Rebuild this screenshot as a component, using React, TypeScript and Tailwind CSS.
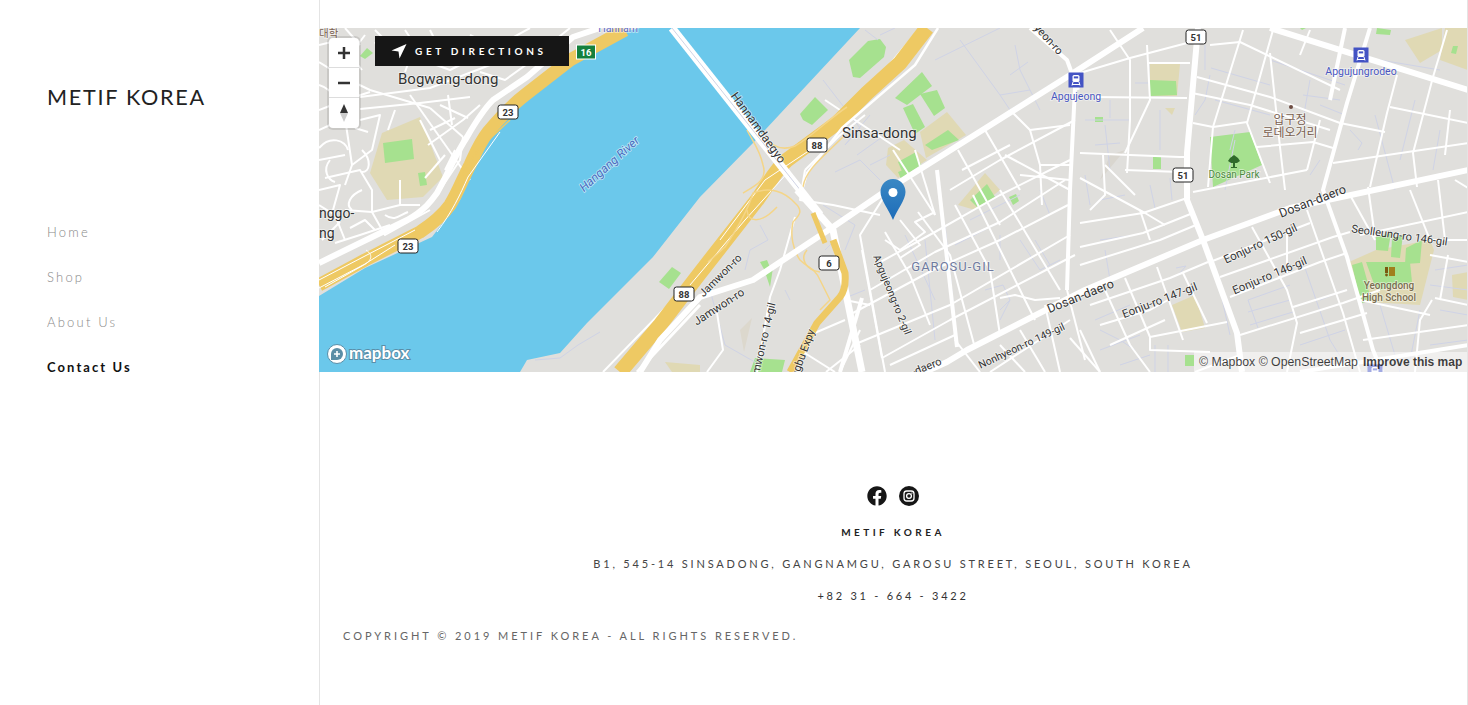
import { FaFacebook } from 'react-icons/fa'

const sans = '"Lato", "Noto Sans", sans-serif'
const din = 'Roboto, "Noto Sans CJK KR", sans-serif'

const parks = [
  'M360 56L367 48L373 53L365 59Z',
  'M383 143L412 139L414 159L385 163Z',
  'M418 173L425 172L427 185L420 186Z',
  'M672 267L681 273L669 289L659 282Z',
  'M849 60L868 41L880 39L886 47L884 57L860 78L853 77Z',
  'M800 114L815 97L828 110L812 125L803 120Z',
  'M895 98L922 72L932 86L907 105Z',
  'M920 94L937 90L945 108L934 116Z',
  'M903 108L913 104L925 127L915 134Z',
  'M925 145L948 130L959 140L932 150Z',
  'M898 162L916 152L921 165L904 176Z',
  'M898 172L903 170L906 176L901 179Z',
  'M970 200L987 184L995 197L977 207Z',
  'M1009 197L1016 194L1019 201L1013 205Z',
  'M1150 80L1176 81L1177 95L1150 96Z',
  'M1095 117L1103 117L1103 122L1095 122Z',
  'M1153 157L1161 157L1161 169L1153 169Z',
  'M1210 137L1250 132L1262 165L1213 187Z',
  'M1377 28L1391 30L1390 35L1376 34Z',
  'M1453 46L1458 46L1456 54L1451 53Z',
  'M1300 28L1306 28L1302 30Z',
  'M1376 237L1391 233L1388 251L1376 250Z',
  'M1392 238L1403 235L1400 258L1391 257Z',
  'M1406 248L1422 240L1420 263L1405 264Z',
  'M1352 265L1362 262L1369 287L1358 291Z',
  'M1366 262L1410 262L1412 282L1380 290L1374 284Z',
  'M1356 284L1366 283L1372 300L1362 303Z',
  'M755 358L785 360L782 372L750 372Z',
  'M760 262L767 260L771 270L765 271Z',
  'M766 275L773 268L770 287Z',
  'M1185 355L1194 355L1194 366L1185 366Z',
]

const sand = [
  'M382 133L420 117L443 177L423 197L387 200L370 173Z',
  'M888 148L904 140L927 160L898 178L886 165Z',
  'M920 132L947 112L966 135L926 158Z',
  'M958 205L985 173L1000 190L975 210Z',
  'M1150 63L1180 64L1177 96L1150 96Z',
  'M1405 40L1442 28L1442 50L1420 63Z',
  'M1445 28L1468 28L1468 70L1440 60Z',
  'M1172 305L1195 295L1205 328L1182 332Z',
  'M1349 262L1376 250L1430 240L1434 250L1420 305L1368 302L1356 290Z',
  'M1452 275L1468 272L1468 300L1453 297Z',
  'M665 362L700 365L700 372L672 372Z',
  'M1165 108L1175 108L1172 115Z',
]

// service streets
const lanes = [
  'M823 80L860 128L845 145', 'M845 145L870 115', 'M880 35L895 28', 'M865 30L878 40',
  'M935 60L1000 28', 'M960 40L1000 95L1030 90L1020 70L1015 45', 'M1000 95L1010 110L1050 85', 'M1010 75L1028 62',
  'M1030 90L1040 110', 'M835 172L860 160L880 180', 'M857 155L885 135', 'M870 165L890 155',
  'M1135 83L1149 83', 'M1085 120L1130 120', 'M1095 145L1120 143', 'M1105 125L1110 170', 'M1205 45L1205 70',
  'M1210 75L1205 100L1195 115', 'M1211 68L1270 85', 'M1215 100L1270 115', 'M1270 60L1345 85', 'M1303 95L1340 100',
  'M1310 80L1302 125', 'M1320 105L1345 115', 'M1350 130L1362 143L1358 150', 'M1320 160L1310 175', 'M1230 150L1235 130',
  'M1235 140L1225 190', 'M1380 60L1440 70', 'M1375 115L1395 190', 'M1415 100L1400 160', 'M1440 130L1433 170',
  'M1105 250L1110 280', 'M1100 240L1135 235', 'M1176 268L1186 266L1178 275', 'M1220 290L1230 335', 'M1248 300L1290 285',
  'M1248 312L1290 300', 'M1250 325L1293 312', 'M1248 300L1258 328', 'M1305 268L1330 340', 'M1320 300L1345 290',
  'M1300 345L1345 330', 'M1330 340L1350 372', 'M1380 305L1400 372', 'M1420 310L1410 360', 'M1440 310L1468 315',
  'M1430 285L1468 290', 'M1435 270L1468 265', 'M1430 345L1468 340', 'M1100 330L1120 340L1135 350', 'M1095 320L1130 305',
  'M1100 350L1140 335', 'M1120 365L1150 355', 'M1155 345L1155 372', 'M1168 345L1168 372', 'M760 225L768 240L750 250L745 270',
  'M785 290L790 300', 'M710 290L725 345L760 365', 'M823 205L855 225L845 250', 'M825 250L835 240', 'M840 300L865 290',
  'M985 290L1003 285L1010 300L1000 310', 'M970 220L1020 195', 'M1020 240L1040 270L1060 260', 'M1000 235L1000 260',
  'M955 245L1000 222', 'M945 225L955 320', 'M925 240L935 340', 'M905 235L935 300',
  'M535 360L560 358L578 345L600 332', 'M1035 240L1050 265', 'M1000 320L1010 300', 'M1040 190L1050 215', 'M1100 200L1125 195',
  'M1085 175L1090 205', 'M1160 110L1160 150', 'M1110 100L1110 118', 'M1150 185L1155 208', 'M1170 178L1172 200',
]

// ordinary white streets
const streets = [
  // Bogwang-dong
  'M319 62L345 78L370 90L430 108', 'M319 110L345 100L370 92', 'M360 109L420 103L470 97', 'M360 97L430 88L490 65', 'M410 95L470 180',
  'M360 120L380 115L372 150L352 165L345 185', 'M319 130L345 118L352 165', 'M319 160L345 155', 'M325 178L360 170L372 190L372 212',
  'M319 190L340 185L333 210L345 240', 'M345 210L372 212L400 205', 'M372 212L385 235L430 210', 'M335 243L360 235L390 225',
  'M428 145L463 120L480 105', 'M430 108L463 137', 'M375 30L395 50L450 70L490 50L530 28', 'M345 28L360 45', 'M319 45L340 40',
  'M430 30L445 60', 'M400 180L400 205L420 205', 'M440 190L460 160L463 137', 'M425 178L445 155', 'M420 120L440 160',
  'M470 35L510 55L555 40', 'M570 28L545 48', 'M319 205L335 215', 'M322 240L340 222',
  'M319 85C335 90 340 105 338 118', 'M319 148C330 135 345 140 348 150', 'M330 160C322 170 328 180 335 182', 'M355 128L368 132',
  'M362 150C372 160 370 172 362 172', 'M362 190C350 195 345 205 352 210', 'M385 215C395 222 400 215 408 212', 'M395 110L388 130',
  'M362 70L350 55L365 35', 'M385 65L375 42', 'M405 72L415 45L405 30', 'M440 48L465 60', 'M480 72L505 80L530 62', 'M448 95L452 125',
  'M468 118L440 105', 'M430 130L455 118', 'M445 170L455 150', 'M350 228L365 220L375 230',
  // Jamwon side
  'M603 372L673 300L720 245', 'M757 372L770 297L780 270L795 217', 'M717 313L723 350L707 372', 'M800 350L835 372',
  'M810 335L845 320', 'M826 372L860 345', 'M805 170L800 200L833 205L880 215', 'M805 170L840 135L865 115', 'M920 28L885 70',
  'M845 300L870 305', 'M840 372L860 330',
  // Garosu
  'M893 150L935 215', 'M825 100L900 150', 'M885 195L860 235L880 345L885 372', 'M862 250L875 320L882 358', 'M882 358L950 320L1075 255',
  'M858 343L950 305L1070 235', 'M853 313L933 270L1000 240L1068 205', 'M870 290L935 252L1000 222L1065 180', 'M875 265L935 232L1000 195L1070 160',
  'M885 240L900 250L925 232L915 222L935 212', 'M900 220L920 245L900 258', 'M885 232L910 275L930 325', 'M918 212L950 255L975 348', 'M955 205L990 270L1000 335',
  'M973 195L1025 300L1035 320', 'M1000 190L1060 290', 'M950 190L1000 160L1060 128L1075 120', 'M962 170L1010 145', 'M958 150L1000 225',
  'M985 130L1020 190', 'M1010 110L1030 130L1070 125', 'M1030 130L1040 165L1070 165', 'M1040 165L1042 205', 'M1005 155L1070 190',
  'M1020 175L1070 180', 'M915 150L935 215', 'M955 340L980 372', 'M890 365L955 335', 'M1000 345L1025 372', 'M1020 330L1045 372', 'M990 372L1070 320',
  'M1067 290L1085 360', 'M1045 305L1060 372', 'M1070 338L1100 372', 'M1000 298L1015 295L1035 300L1060 298',
  // Apgujeong to Dosan
  'M1080 73L1130 58L1187 43', 'M1110 30L1130 60L1130 120L1127 173', 'M1147 63L1190 63', 'M1147 45L1150 100L1125 153', 'M1093 97L1187 98',
  'M1080 153L1180 157L1187 157', 'M1103 155L1105 195L1090 210', 'M1125 170L1180 172', 'M1105 165L1135 195', 'M1080 178L1145 213L1165 225',
  'M1080 223L1143 213L1190 197', 'M1080 247L1143 233L1193 213', 'M1140 210L1150 240', 'M1090 305L1170 278L1208 262',
  'M1080 265L1160 240L1196 225', 'M1157 267L1183 340', 'M1183 273L1207 323', 'M1150 337L1227 322', 'M1150 337L1150 350L1210 352',
  'M1100 325L1150 310L1168 300', 'M1110 345L1165 320', 'M1080 330L1100 372', 'M1105 290L1130 345L1150 372', 'M1125 278L1150 337',
  'M1210 45L1240 42L1340 90', 'M1197 77L1270 97L1340 123L1385 132', 'M1192 93L1250 105L1330 130', 'M1243 30L1213 127L1208 187', 'M1273 30L1247 123L1270 183',
  'M1213 127L1247 122', 'M1193 123L1213 127', 'M1257 147L1313 142L1333 148', 'M1193 192L1307 170', 'M1270 53L1280 147L1285 190', 'M1307 170L1320 120',
  'M1310 30L1300 55', 'M1397 75L1387 113L1370 187', 'M1447 30L1433 77L1413 153L1417 187', 'M1390 107L1468 123', 'M1333 163L1468 143', 'M1450 110L1445 155',
  'M1368 187L1375 237', 'M1210 262L1310 223', 'M1220 277L1333 237L1350 232', 'M1230 297L1320 262L1347 253', 'M1240 335L1343 303L1380 290', 'M1293 307L1347 290',
  'M1300 333L1367 313', 'M1363 340L1468 325', 'M1252 227L1287 290L1297 323L1287 372', 'M1307 210L1343 313L1360 372', 'M1287 230L1287 273',
  'M1410 190L1430 240', 'M1350 195L1375 240', 'M1430 240L1468 240', 'M1360 235L1468 212', 'M1438 180L1445 240', 'M1432 300L1420 320L1415 372', 'M1360 300L1430 315', 'M1430 255L1468 262',
  'M1468 305L1435 298', 'M1448 255L1440 300', 'M1455 180L1468 188', 'M1195 372L1240 355',
]

// avenues
const avenues = [
  'M937 170L957 347', 'M1345 28L1330 100', 'M1370 28L1347 103L1323 190L1347 257L1373 350L1382 372',
  'M1075 87L1070 190L1067 290', 'M840 372L862 298', 'M1468 345L1300 372',
]

function Road({ d, w, c = '#fff' }: { d: string; w: number; c?: string }) {
  return <path d={d} stroke={c} strokeWidth={w} fill="none" strokeLinejoin="round" />
}

function Label({ x, y, r = 0, s = 11, c = '#333', children, anchor = 'middle', w = 400, sp = 0, i = false }: {
  x: number; y: number; r?: number; s?: number; c?: string; children: string; anchor?: 'middle' | 'start'; w?: number; sp?: number; i?: boolean
}) {
  return (
    <text
      x={x}
      y={y}
      fontSize={s}
      fill={c}
      fontWeight={w}
      letterSpacing={sp}
      fontStyle={i ? 'italic' : 'normal'}
      textAnchor={anchor}
      fontFamily={din}
      stroke="#fff"
      strokeOpacity={0.55}
      strokeWidth={1.6}
      paintOrder="stroke"
      transform={r ? `rotate(${r} ${x} ${y})` : undefined}
    >
      {children}
    </text>
  )
}

function Shield({ x, y, t, green = false }: { x: number; y: number; t: string; green?: boolean }) {
  const w = green ? 19 : 20
  return (
    <g>
      <rect
        x={x - w / 2}
        y={y - 7}
        width={w}
        height={14}
        rx={green ? 0 : 2.5}
        fill={green ? '#15803d' : '#fff'}
        stroke={green ? '#fff' : '#222'}
        strokeWidth={1}
      />
      <text x={x} y={y + 3.5} fontSize={9.5} fontWeight={700} textAnchor="middle" fill={green ? '#fff' : '#333'} fontFamily={din}>
        {t}
      </text>
    </g>
  )
}

function Metro({ x, y }: { x: number; y: number }) {
  return (
    <g>
      <rect x={x - 7.5} y={y - 7.5} width={15} height={15} fill="#4353c4" />
      <rect x={x - 3.5} y={y - 5} width={7} height={7} rx={1.5} fill="#fff" />
      <rect x={x - 2.2} y={y - 3.6} width={4.4} height={2} fill="#4353c4" />
      <path d={`M${x - 4} ${y + 4.5}H${x + 4}M${x - 3} ${y + 2}L${x - 4} ${y + 5.5}M${x + 3} ${y + 2}L${x + 4} ${y + 5.5}`} stroke="#fff" strokeWidth={1} />
    </g>
  )
}

function MapCanvas() {
  return (
    <svg viewBox="319 28 1148 344" className="block h-full w-full">
      <rect x={319} y={28} width={1149} height={344} fill="#e0dfdc" />
      <path
        d="M319 296L365 268L432 237L460 200L480 155L497 127L520 103L567 68L620 33L640 28H860L753 143L700 197L653 257L587 323L560 353L527 360L520 372H319Z"
        fill="#6bc8eb"
      />
      {sand.map(d => <path key={d} d={d} fill="#e0d9b4" />)}
      {parks.map(d => <path key={d} d={d} fill="#a6e18f" />)}
      <path d="M740 330L752 318L744 352Z" fill="#dcd8cd" />
      <path d="M1110 155L1125 150L1100 180Z" fill="#d9d6cf" />

      {lanes.map(d => <Road key={d} d={d} w={1} c="#cfd3e6" />)}
      {streets.map(d => <Road key={d} d={d} w={2} />)}
      {avenues.map(d => <Road key={d} d={d} w={4} />)}

      {/* big roads */}
      <Road d="M319 263L407 220C425 210 432 200 437 193C450 170 455 155 467 137C478 118 485 108 493 100L527 77L573 37L600 28" w={6} />
      <Road d="M319 285L365 260L420 232C435 222 443 215 450 205C458 192 463 178 470 165C476 152 480 142 488 132C498 120 512 105 525 95L570 60L625 30" w={13} c="#eec963" />
      <Road d="M319 280L365 256L415 230" w={1} />
      <Road d="M319 288L365 264L395 245" w={1} />
      <Road d="M366 250C375 256 370 262 362 266L325 287" w={1} />
      <Road d="M437 232C452 212 460 195 468 177L500 132" w={1} />
      <Road d="M438 216C450 195 465 170 478 150L510 120" w={1.5} c="#eec963" />
      <Road d="M927 28L900 63L867 93L837 123L787 160C775 170 768 185 757 200L700 273L660 325L620 372" w={15} c="#eec963" />
      <Road d="M720 240L765 180L810 150" w={1} />
      <Road d="M690 285L745 220L790 170" w={1} />
      <Road d="M938 28L915 65L880 95L842 128L807 173L803 187" w={2.5} />
      <Road d="M637 372L700 305" w={3} />
      {/* interchange ramps */}
      <Road d="M708 262L725 247C735 232 748 210 753 193C770 186 785 192 795 203C805 212 797 217 793 222C790 235 793 250 800 260C808 268 815 268 820 280L830 300L820 310" w={1.5} c="#f4d588" />
      <Road d="M747 210C748 222 760 225 777 207" w={1.5} c="#f4d588" />
      <Road d="M807 250C800 258 805 270 820 272" w={1.5} c="#f4d588" />
      <Road d="M743 193C755 186 768 180 763 165C760 150 752 140 747 130" w={1.5} c="#f4d588" />
      <Road d="M767 140C775 148 785 150 795 146C810 138 830 118 847 107" w={1.5} c="#f4d588" />
      <Road d="M803 187C805 170 825 155 843 137" w={1.5} c="#f4d588" />
      <Road d="M1143 28L1067 77L887 190L833 227L753 280L700 297L660 340L640 372" w={6} />
      <Road d="M1270 28L1468 90" w={6} />
      <Road d="M672 28L820 215" w={8} />
      <Road d="M672 28L820 215" w={1} c="#cfd3e4" />
      <Road d="M797 190L833 230L862 372" w={7} />
      <Road d="M813 213L825 243" w={5} c="#eec963" />
      <Road d="M833 240L845 273C846 285 844 292 840 297L817 323L790 372" w={7} c="#eec963" />
      <Road d="M1468 170L1290 208L1203 240L1085 290L967 350L947 362L925 372" w={6} />
      <Road d="M1198 28L1187 153L1187 200L1203 240L1237 333L1242 372" w={6} />
      <Road d="M1030 28L1067 60L1078 90" w={4} />

      <Label x={398} y={84} s={15} anchor="start">Bogwang-dong</Label>
      <Label x={618} y={32} s={10.5} c="#5f6cc8">Hannam</Label>
      <Label x={319} y={37} s={10.5} c="#7a5f50" anchor="start">대학</Label>
      <Label x={319} y={218} s={14} anchor="start">nggo-</Label>
      <Label x={319} y={238} s={14} anchor="start">ng</Label>
      <Label x={612} y={167} r={-42} s={12} c="#4a6cc0" i>Hangang River</Label>
      <Label x={755} y={130} r={54} s={12}>Hannamdaegyo</Label>
      <Label x={842} y={138} s={15} anchor="start">Sinsa-dong</Label>
      <Label x={1046} y={42} r={48} s={11}>yeon-ro</Label>
      <Label x={1076} y={100} s={10.5} c="#4a56c0">Apgujeong</Label>
      <Label x={1361} y={75} s={10.5} c="#4a56c0">Apgujungrodeo</Label>
      <circle cx={1291} cy={107} r={2} fill="#6d4c41" />
      <Label x={1290} y={124} s={12} c="#7a5f50">압구정</Label>
      <Label x={1290} y={137} s={12} c="#7a5f50">로데오거리</Label>
      <Label x={1234} y={178} s={10} c="#4d8a3f">Dosan Park</Label>
      <path d="M1234 155l4 3 2 3-3 2h-2v4h2v1h-6v-1h2v-4h-2l-3-2 2-3z" fill="#2f6b2a" />
      <Label x={1314} y={205} r={-21} s={12.5}>Dosan-daero</Label>
      <Label x={1082} y={300} r={-22} s={12.5}>Dosan-daero</Label>
      <Label x={1262} y={247} r={-25} s={11.5}>Eonju-ro 150-gil</Label>
      <Label x={1271} y={279} r={-23} s={11.5}>Eonju-ro 146-gil</Label>
      <Label x={1161} y={304} r={-21} s={11.5}>Eonju-ro 147-gil</Label>
      <Label x={1399} y={239} r={8} s={11}>Seolleung-ro 146-gil</Label>
      <Label x={1389} y={289} s={10} c="#7a6d50" w={500}>Yeongdong</Label>
      <Label x={1389} y={301} s={10} c="#7a6d50" w={500}>High School</Label>
      <rect x={1385} y={267} width={3} height={6} fill="#7a5a10" />
      <circle cx={1386.5} cy={275} r={1.4} fill="#7a5a10" />
      <rect x={1389} y={267} width={6} height={9} fill="#a07f1c" />
      <Label x={953} y={271} s={13} c="#6f7aa0" sp={1}>GAROSU-GIL</Label>
      <Label x={889} y={296} r={68} s={10.5}>Apgujeong-ro 2-gil</Label>
      <Label x={1023} y={349} r={-25} s={10.5}>Nonhyeon-ro 149-gil</Label>
      <Label x={723} y={278} r={-45} s={11}>Jamwon-ro</Label>
      <Label x={721} y={310} r={-33} s={11.5}>Jamwon-ro</Label>
      <Label x={766} y={345} r={-77} s={11}>Jamwon-ro 14-gil</Label>
      <Label x={802} y={366} r={-70} s={11}>Gyeongbu Expy</Label>
      <Label x={928} y={370} r={-22} s={11}>-daero</Label>

      <Shield x={586} y={52} t="16" green />
      <Shield x={508} y={112} t="23" />
      <Shield x={408} y={246} t="23" />
      <Shield x={817} y={145} t="88" />
      <Shield x={684} y={294} t="88" />
      <Shield x={829} y={263} t="6" />
      <Shield x={1196} y={37} t="51" />
      <Shield x={1183} y={175} t="51" />
      <Metro x={1076} y={80} />
      <Metro x={1361} y={55} />
      <Metro x={1375} y={372} />

      <defs>
        <linearGradient id="pin" x1="0" y1="0" x2="0" y2="1">
          <stop offset="0" stopColor="#3a88c4" />
          <stop offset="1" stopColor="#1d6cb8" />
        </linearGradient>
      </defs>
      <path d="M893 179C885.800 179 880.500 184.800 880.500 192C880.500 200 889 210 893 220C897 210 905.500 200 905.500 192C905.500 184.800 900.200 179 893 179Z" fill="url(#pin)" />
      <circle cx={893} cy={192.500} r={4.500} fill="#fff" />

      {/* mapbox wordmark */}
      <circle cx={337} cy={354} r={9.500} fill="#fff" stroke="#5a8ea8" strokeWidth={1} />
      <circle cx={337} cy={354} r={6} fill="#5b8ea6" />
      <rect x={331} y={354} width={6} height={6} fill="#5b8ea6" />
      <path d="M337 351v6M334 354h6" stroke="#fff" strokeWidth={1.600} />
      <text x={349} y={359} fontSize={17} fontWeight={700} fill="#fff" stroke="#5a8ea8" strokeWidth={2} paintOrder="stroke" fontFamily={sans}>
        mapbox
      </text>
    </svg>
  )
}

function MapControls() {
  return (
    <div className="absolute left-[10px] top-[10px] flex w-[30px] flex-col rounded bg-white shadow-[0_0_0_2px_rgba(0,0,0,0.1)]">
      <div className="flex h-[30px] items-center justify-center border-b border-[#ddd]">
        <svg width="14" height="14" viewBox="0 0 14 14"><path d="M7 1v12M1 7h12" stroke="#333" strokeWidth="2.500" /></svg>
      </div>
      <div className="flex h-[30px] items-center justify-center border-b border-[#ddd]">
        <svg width="14" height="14" viewBox="0 0 14 14"><path d="M1 7h12" stroke="#333" strokeWidth="2.500" /></svg>
      </div>
      <div className="flex h-[30px] items-center justify-center">
        <svg width="10" height="20" viewBox="0 0 10 20">
          <path d="M5 1L9 10H1Z" fill="#333" />
          <path d="M5 19L9 10H1Z" fill="#ccc" />
        </svg>
      </div>
    </div>
  )
}

function DirectionsButton() {
  return (
    <div className="absolute left-[56px] top-[8px] flex h-[30px] w-[194px] items-center gap-[8px] bg-[#161616] pl-4">
      <svg width="16" height="16" viewBox="0 0 16 16" fill="#fff">
        <path d="M15.500 1L8.500 15.500L7.500 8.500L0.500 7.500Z" />
      </svg>
      <span className="text-[10px] font-bold uppercase leading-none tracking-[0.365em] text-white [font-family:Lato,sans-serif]">Get Directions</span>
    </div>
  )
}

function Attribution() {
  return (
    <div className="absolute bottom-0 right-0 flex h-[20px] w-[273px] items-center whitespace-nowrap bg-white/50 pl-[5px] text-[12.3px] text-black/75 [font-family:'Liberation_Sans',sans-serif]">
      <span>© Mapbox © OpenStreetMap</span>
      <span className="ml-[5px] text-[12px] font-bold">Improve this map</span>
    </div>
  )
}

function Sidebar() {
  const links = ['Home', 'Shop', 'About Us']
  return (
    <aside className="w-[320px] shrink-0 border-r border-[#e4e4e4] pl-[47px] pt-[84px]">
      <h1 className="text-[21.6px] font-normal leading-[26px] tracking-[0.08em] text-[#222]">METIF KOREA</h1>
      <nav className="mt-[113px] flex flex-col gap-[27px] text-[13px] leading-[18px] tracking-[0.17em]">
        {links.map(l => (
          <a key={l} className="font-light text-[#888]">{l}</a>
        ))}
        <a className="font-bold tracking-[0.16em] text-[#111]">Contact Us</a>
      </nav>
    </aside>
  )
}

function Footer() {
  return (
    <footer className="flex flex-col px-6 pt-[114px]">
      <div className="flex items-center justify-center gap-[12px] pr-[1px]">
        <FaFacebook className="text-[20px] text-[#161616]" />
        <svg width="20" height="20" viewBox="0 0 20 20">
          <circle cx="10" cy="10" r="10" fill="#161616" />
          <rect x="5" y="5" width="10" height="10" rx="2.800" fill="none" stroke="#fff" strokeWidth="1.300" />
          <circle cx="10" cy="10" r="2.400" fill="none" stroke="#fff" strokeWidth="1.300" />
          <circle cx="12.900" cy="7.100" r="0.700" fill="#fff" />
        </svg>
      </div>
      <p className="mt-[19px] text-center text-[10px] font-bold leading-[14px] tracking-[0.345em] text-[#222]">METIF KOREA</p>
      <p className="mt-[17px] text-center text-[11px] leading-[16px] tracking-[0.255em] text-[#444]">B1, 545-14 SINSADONG, GANGNAMGU, GAROSU STREET, SEOUL, SOUTH KOREA</p>
      <p className="mt-[16px] text-center text-[11px] leading-[16px] tracking-[0.25em] text-[#333]">+82 31 - 664 - 3422</p>
      <p className="mt-[24px] text-[11px] leading-[16px] tracking-[0.268em] text-[#666]">COPYRIGHT © 2019 METIF KOREA - ALL RIGHTS RESERVED.</p>
    </footer>
  )
}

export default function App() {
  return (
    <div className="flex h-[705px] overflow-hidden bg-white [font-family:Lato,'Noto_Sans',sans-serif]">
      <Sidebar />
      <main className="-ml-px min-w-0 flex-1 border-r border-[#e4e4e4] pt-[28px]">
        <div className="relative h-[344px] overflow-hidden">
          <MapCanvas />
          <MapControls />
          <DirectionsButton />
          <Attribution />
        </div>
        <Footer />
      </main>
    </div>
  )
}
